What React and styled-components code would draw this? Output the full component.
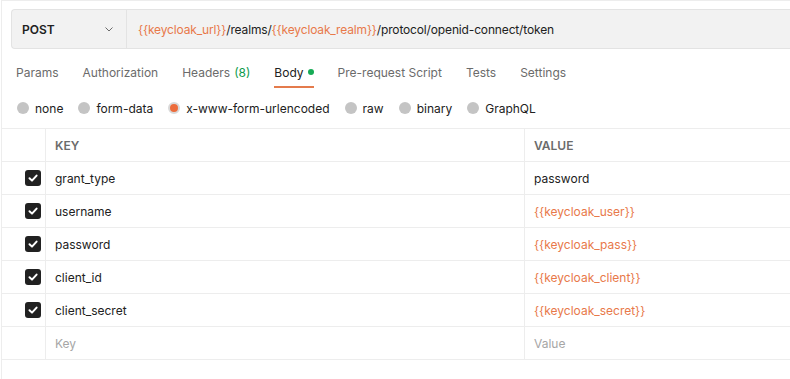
import styled, { createGlobalStyle } from "styled-components"

const GlobalStyle = createGlobalStyle`
    body {
        margin: 0;
        background: #ffffff;
        font-family: Inter, "Noto Sans", sans-serif;
        font-size: 12px;
        color: #212121;
    }
`

const tabs = [
    { label: "Params" },
    { label: "Authorization" },
    { label: "Headers", count: "(8)" },
    { label: "Body", active: true, dot: true },
    { label: "Pre-request Script" },
    { label: "Tests" },
    { label: "Settings" },
]

const bodyTypes = ["none", "form-data", "x-www-form-urlencoded", "raw", "binary", "GraphQL"]

const rows = [
    { key: "grant_type", value: "password" },
    { key: "username", value: "{{keycloak_user}}", variable: true },
    { key: "password", value: "{{keycloak_pass}}", variable: true },
    { key: "client_id", value: "{{keycloak_client}}", variable: true },
    { key: "client_secret", value: "{{keycloak_secret}}", variable: true },
]

export default function App () {
    return (
        <Page>
            <GlobalStyle />
            <UrlBar>
                <Method>
                    POST
                    <svg width="10" height="10" viewBox="0 0 10 10" fill="none">
                        <path d="M1.5 3.5 L5 7 L8.5 3.5" stroke="#6b6b6b" strokeWidth="1" />
                    </svg>
                </Method>
                <Url>
                    <Var>{"{{keycloak_url}}"}</Var>/realms/<Var>{"{{keycloak_realm}}"}</Var>/protocol/openid-connect/token
                </Url>
            </UrlBar>

            <Tabs>
                {tabs.map(t => (
                    <Tab key={t.label} active={t.active}>
                        {t.label}
                        {t.count && <Count>{t.count}</Count>}
                        {t.dot && <Dot />}
                    </Tab>
                ))}
            </Tabs>

            <Radios>
                {bodyTypes.map(b => (
                    <RadioItem key={b}>
                        <Radio selected={b === "x-www-form-urlencoded"} />
                        {b}
                    </RadioItem>
                ))}
            </Radios>

            <Table>
                <Row>
                    <CheckCell />
                    <Cell header>KEY</Cell>
                    <Cell header>VALUE</Cell>
                </Row>
                {rows.map(r => (
                    <Row key={r.key}>
                        <CheckCell>
                            <CheckBox>
                                <svg width="12" height="12" viewBox="0 0 12 12" fill="none">
                                    <path d="M2.5 6.2 L5 8.6 L9.6 3.6" stroke="#ffffff" strokeWidth="2" strokeLinecap="round" strokeLinejoin="round" />
                                </svg>
                            </CheckBox>
                        </CheckCell>
                        <Cell>{r.key}</Cell>
                        <Cell variable={r.variable}>{r.value}</Cell>
                    </Row>
                ))}
                <Row>
                    <CheckCell />
                    <Cell placeholder>Key</Cell>
                    <Cell placeholder>Value</Cell>
                </Row>
            </Table>
        </Page>
    )
}

const Page = styled.div`
    box-sizing: border-box;
    width: 790px;
    height: 379px;
    border-top: 1px solid #ededed;
    border-left: 1px solid #ededed;
    margin-left: 1px;
    padding-top: 8px;
    overflow: hidden;
`

const UrlBar = styled.div`
    display: flex;
    height: 40px;
    margin-left: 9px;
    background-color: #f2f2f2;
    border: 1px solid #e3e3e3;
    border-right: none;
    border-radius: 4px 0 0 4px;
    box-sizing: border-box;
`

const Method = styled.div`
    display: flex;
    align-items: center;
    justify-content: space-between;
    width: 115px;
    box-sizing: border-box;
    padding: 0 12px 0 10px;
    font-weight: 600;
    color: #212121;
    border-right: 1px solid #e3e3e3;
`

const Url = styled.div`
    display: flex;
    align-items: center;
    padding-left: 11px;
    color: #212121;
    white-space: nowrap;
    letter-spacing: -0.15px;
`

const Var = styled.span`
    color: #e8794a;
`

const Tabs = styled.div`
    display: flex;
    gap: 24px;
    height: 39px;
    padding-left: 14px;
`

const Tab = styled.div`
    display: flex;
    align-items: center;
    gap: 4px;
    box-sizing: border-box;
    height: 39px;
    padding-top: 9px;
    color: ${props => props.active ? "#212121" : "#6b6b6b"};
    border-bottom: 2px solid ${props => props.active ? "#e47b4c" : "transparent"};
`

const Count = styled.span`
    color: #0d9b4c;
`

const Dot = styled.span`
    width: 6px;
    height: 6px;
    border-radius: 50%;
    background-color: #16ab55;
`

const Radios = styled.div`
    display: flex;
    align-items: center;
    gap: 15px;
    height: 40px;
    padding-left: 15px;
`

const RadioItem = styled.div`
    display: flex;
    align-items: center;
    gap: 6px;
    color: #212121;
`

const Radio = styled.span`
    box-sizing: border-box;
    width: 12px;
    height: 12px;
    border-radius: 50%;
    background-color: ${props => props.selected ? "#ec6c3c" : "#c4c4c4"};
    border: ${props => props.selected ? "2px solid #d9d9d9" : "none"};
`

const Table = styled.div`
    border-top: 1px solid #ededed;
`

const Row = styled.div`
    display: grid;
    grid-template-columns: 44px 479px 1fr;
    height: 33px;
    border-bottom: 1px solid #ededed;
    box-sizing: border-box;
`

const CheckCell = styled.div`
    display: flex;
    align-items: center;
    justify-content: flex-end;
    padding-right: 4px;
    border-right: 1px solid #ededed;
`

const CheckBox = styled.span`
    display: flex;
    align-items: center;
    justify-content: center;
    width: 16px;
    height: 16px;
    border-radius: 3px;
    background-color: #212121;
`

const Cell = styled.div`
    display: flex;
    align-items: center;
    padding-left: 9px;
    border-right: 1px solid #ededed;
    font-weight: ${props => props.header ? 600 : 400};
    color: ${props => props.header ? "#6b6b6b" : props.placeholder ? "#a6a6a6" : props.variable ? "#e8794a" : "#212121"};
    &:last-child {
        border-right: none;
    }
`
